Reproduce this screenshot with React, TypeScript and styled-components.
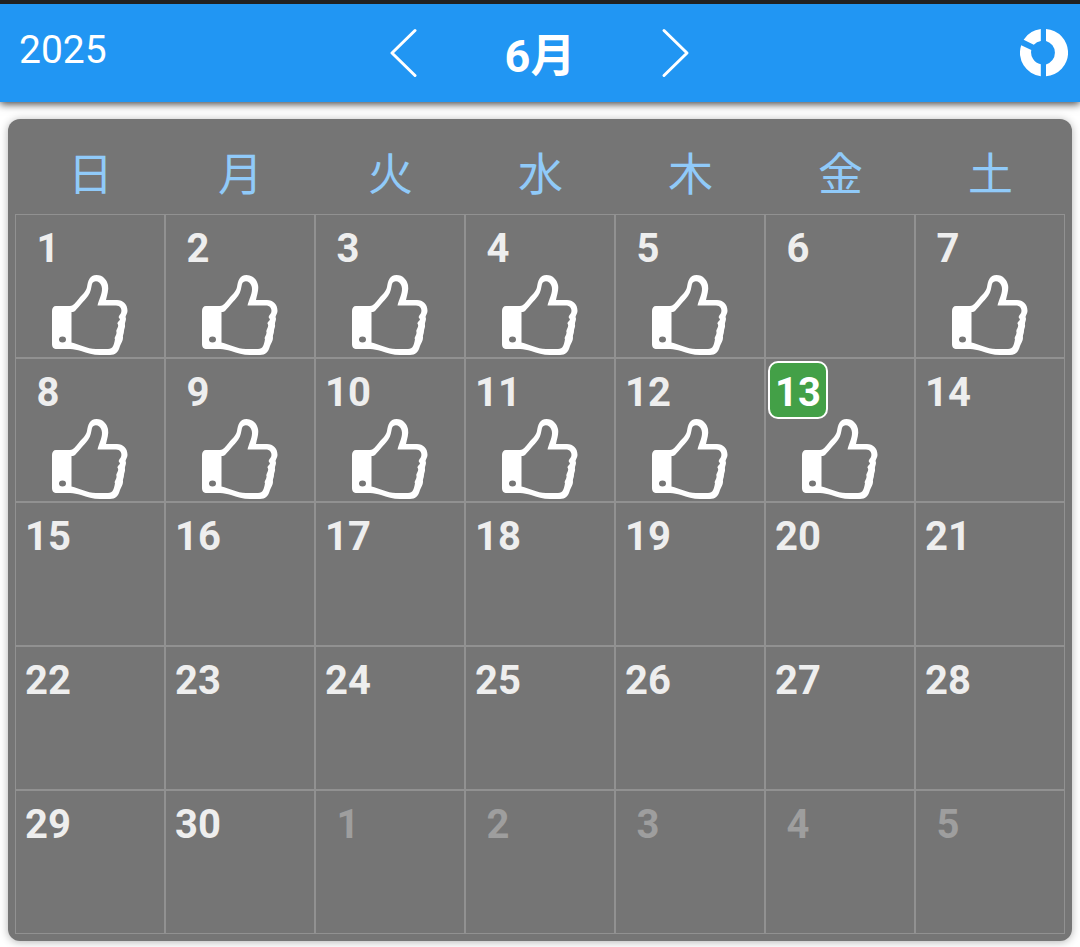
import React from 'react';
import styled, { createGlobalStyle } from 'styled-components';

const GlobalStyle = createGlobalStyle`
  * { box-sizing: border-box; }
  body {
    margin: 0;
    background: #fff;
    font-family: Roboto, "Noto Sans CJK JP", sans-serif;
  }
`;

const AppBar = styled.header`
  display: grid;
  grid-template-columns: 1fr auto 1fr;
  align-items: center;
  height: 102px;
  padding: 0 12px;
  border-top: 4px solid #212121;
  background: #2196f3;
  color: #fff;
  box-shadow: 0 2px 8px rgba(0, 0, 0, 0.75);
`;

const Year = styled.span`
  padding: 0 0 6px 7px;
  font-size: 39px;
  line-height: 48px;
`;

const MonthNav = styled.nav`
  display: flex;
  align-items: center;
  justify-content: space-between;
  width: 300px;
`;

const MonthTitle = styled.h1`
  margin: 0;
  padding-top: 8px;
  font-size: 45px;
  font-weight: 700;
  line-height: 56px;
`;

const IconButton = styled.button`
  display: flex;
  padding: 0;
  border: 0;
  background: none;
  color: inherit;
  cursor: pointer;
`;

const ChartButton = styled(IconButton)`
  justify-self: end;
`;

const Card = styled.main`
  margin: 17px 8px 6px;
  padding: 7px;
  border-radius: 12px;
  background: #757575;
  box-shadow: 0 1px 8px rgba(0, 0, 0, 0.3);
`;

const Month = styled.table`
  width: 100%;
  table-layout: fixed;
  border-collapse: separate;
  border-spacing: 0;
`;

const Weekday = styled.th`
  height: 88px;
  padding: 4px 0 0 1px;
  color: #90caf9;
  font-family: "Noto Sans CJK JP", sans-serif;
  font-size: 45px;
  font-weight: 400;
  line-height: 56px;
  text-align: center;
`;

const Day = styled.td`
  height: 144px;
  padding: 2px;
  border: 1px solid #919191;
  vertical-align: top;
`;

const DayNumber = styled.time<{ $today: boolean; $muted: boolean }>`
  display: block;
  width: 60px;
  height: 58px;
  border: 2px solid ${({ $today }) => ($today ? '#fff' : 'transparent')};
  border-radius: 10px;
  background: ${({ $today }) => ($today ? '#43a047' : 'none')};
  color: ${({ $today, $muted }) => ($muted ? '#9e9e9e' : $today ? '#fff' : '#eee')};
  font-size: 40px;
  font-weight: 700;
  line-height: 60px;
  text-align: center;
`;

const Stamp = styled.svg`
  display: block;
  width: 80px;
  height: 80px;
  margin: 0 auto;
`;

const Chevron = ({ flip = false }: { flip?: boolean }) => (
  <svg width="30" height="52" viewBox="0 0 30 52" fill="none" stroke="currentColor" strokeWidth="3" strokeLinecap="round" strokeLinejoin="round" aria-hidden="true">
    <path d={flip ? 'M4 3.5L27 26L4 48.5' : 'M25 3.5L2 26L25 48.5'} />
  </svg>
);

const ChartIcon = () => (
  <svg width="48" height="48" viewBox="0 0 48 48" fill="currentColor" aria-hidden="true">
    <path d="M26 .1A23.6 23.6 0 0 1 26 47.200V35.4A12.2 12.2 0 0 0 26 11.9Z" />
    <path d="M20.800 .1V12A12.2 12.2 0 0 0 13.800 15.7L3.600 10.8A23.6 23.6 0 0 1 20.800 .1Z" />
    <path d="M1.200 16.200L11.300 21A12.2 12.2 0 0 0 20.800 35.3V47.200A23.6 23.6 0 0 1 1.200 16.200Z" />
  </svg>
);

const ThumbUp = () => (
  <Stamp viewBox="0 0 80 80" role="img" aria-label="いいね">
    <path
      fill="#fff"
      fillRule="evenodd"
      d="M6 31H20C23 31 25.5 28 29 23.5C32 19.5 36 17 37 12C38 6 39.500 0 46.500 0C53 0 57 5 58 10C59 15 57 20 56 25H67C73 25 77.500 29 77.500 36C77.500 38 76 40 75.500 42C77 45 74.500 47 75 50C75.500 52 74 54 74 56C74 59 72.500 60 73 63C73 66 71 68 70 71C68.500 77 65.500 80 60 80H50C43 80 37 78 31 76C27 75 24 74 20 74H7C3.500 74 2 72 2 69V36C2 33 3.500 31 6 31Z
      M21.500 37V67.500C29 69 37 74 46 74H58C63 74 64 70 65 64C63.500 63 67 60 66.500 57C65.500 55 69 52 68 49.500C66 47.500 70 46 70 44C67 42 70 40 71 38C72.500 34 70 30.500 66 30.500H47.500C49 24 53.500 17 51.500 11C50 5.500 43.500 4.500 42 9C41 13 41 17 38 21C34 26 28.500 32 25.500 35.500C24.500 36.500 23 37 21.500 37Z
      M12.500 61.500A3.500 3 0 1 0 12.500 67.500A3.500 3 0 1 0 12.500 61.500Z"
    />
  </Stamp>
);

const weekdays = ['日', '月', '火', '水', '木', '金', '土'];
const likedDays = new Set([1, 2, 3, 4, 5, 7, 8, 9, 10, 11, 12, 13]);
const today = 13;
const daysInMonth = 30;
const weeks = Array.from({ length: 5 }, (_, week) =>
  Array.from({ length: 7 }, (_, day) => week * 7 + day + 1),
);

export default function App() {
  return (
    <>
      <GlobalStyle />
      <AppBar>
        <Year>2025</Year>
        <MonthNav aria-label="月の切り替え">
          <IconButton type="button" aria-label="前の月"><Chevron /></IconButton>
          <MonthTitle>6月</MonthTitle>
          <IconButton type="button" aria-label="次の月"><Chevron flip /></IconButton>
        </MonthNav>
        <ChartButton type="button" aria-label="統計"><ChartIcon /></ChartButton>
      </AppBar>
      <Card>
        <Month>
          <thead>
            <tr>{weekdays.map((name) => <Weekday key={name} scope="col">{name}</Weekday>)}</tr>
          </thead>
          <tbody>
            {weeks.map((week) => (
              <tr key={week[0]}>
                {week.map((day) => {
                  const muted = day > daysInMonth;
                  return (
                    <Day key={day}>
                      <DayNumber $today={day === today} $muted={muted}>
                        {muted ? day - daysInMonth : day}
                      </DayNumber>
                      {likedDays.has(day) && <ThumbUp />}
                    </Day>
                  );
                })}
              </tr>
            ))}
          </tbody>
        </Month>
      </Card>
    </>
  );
}
